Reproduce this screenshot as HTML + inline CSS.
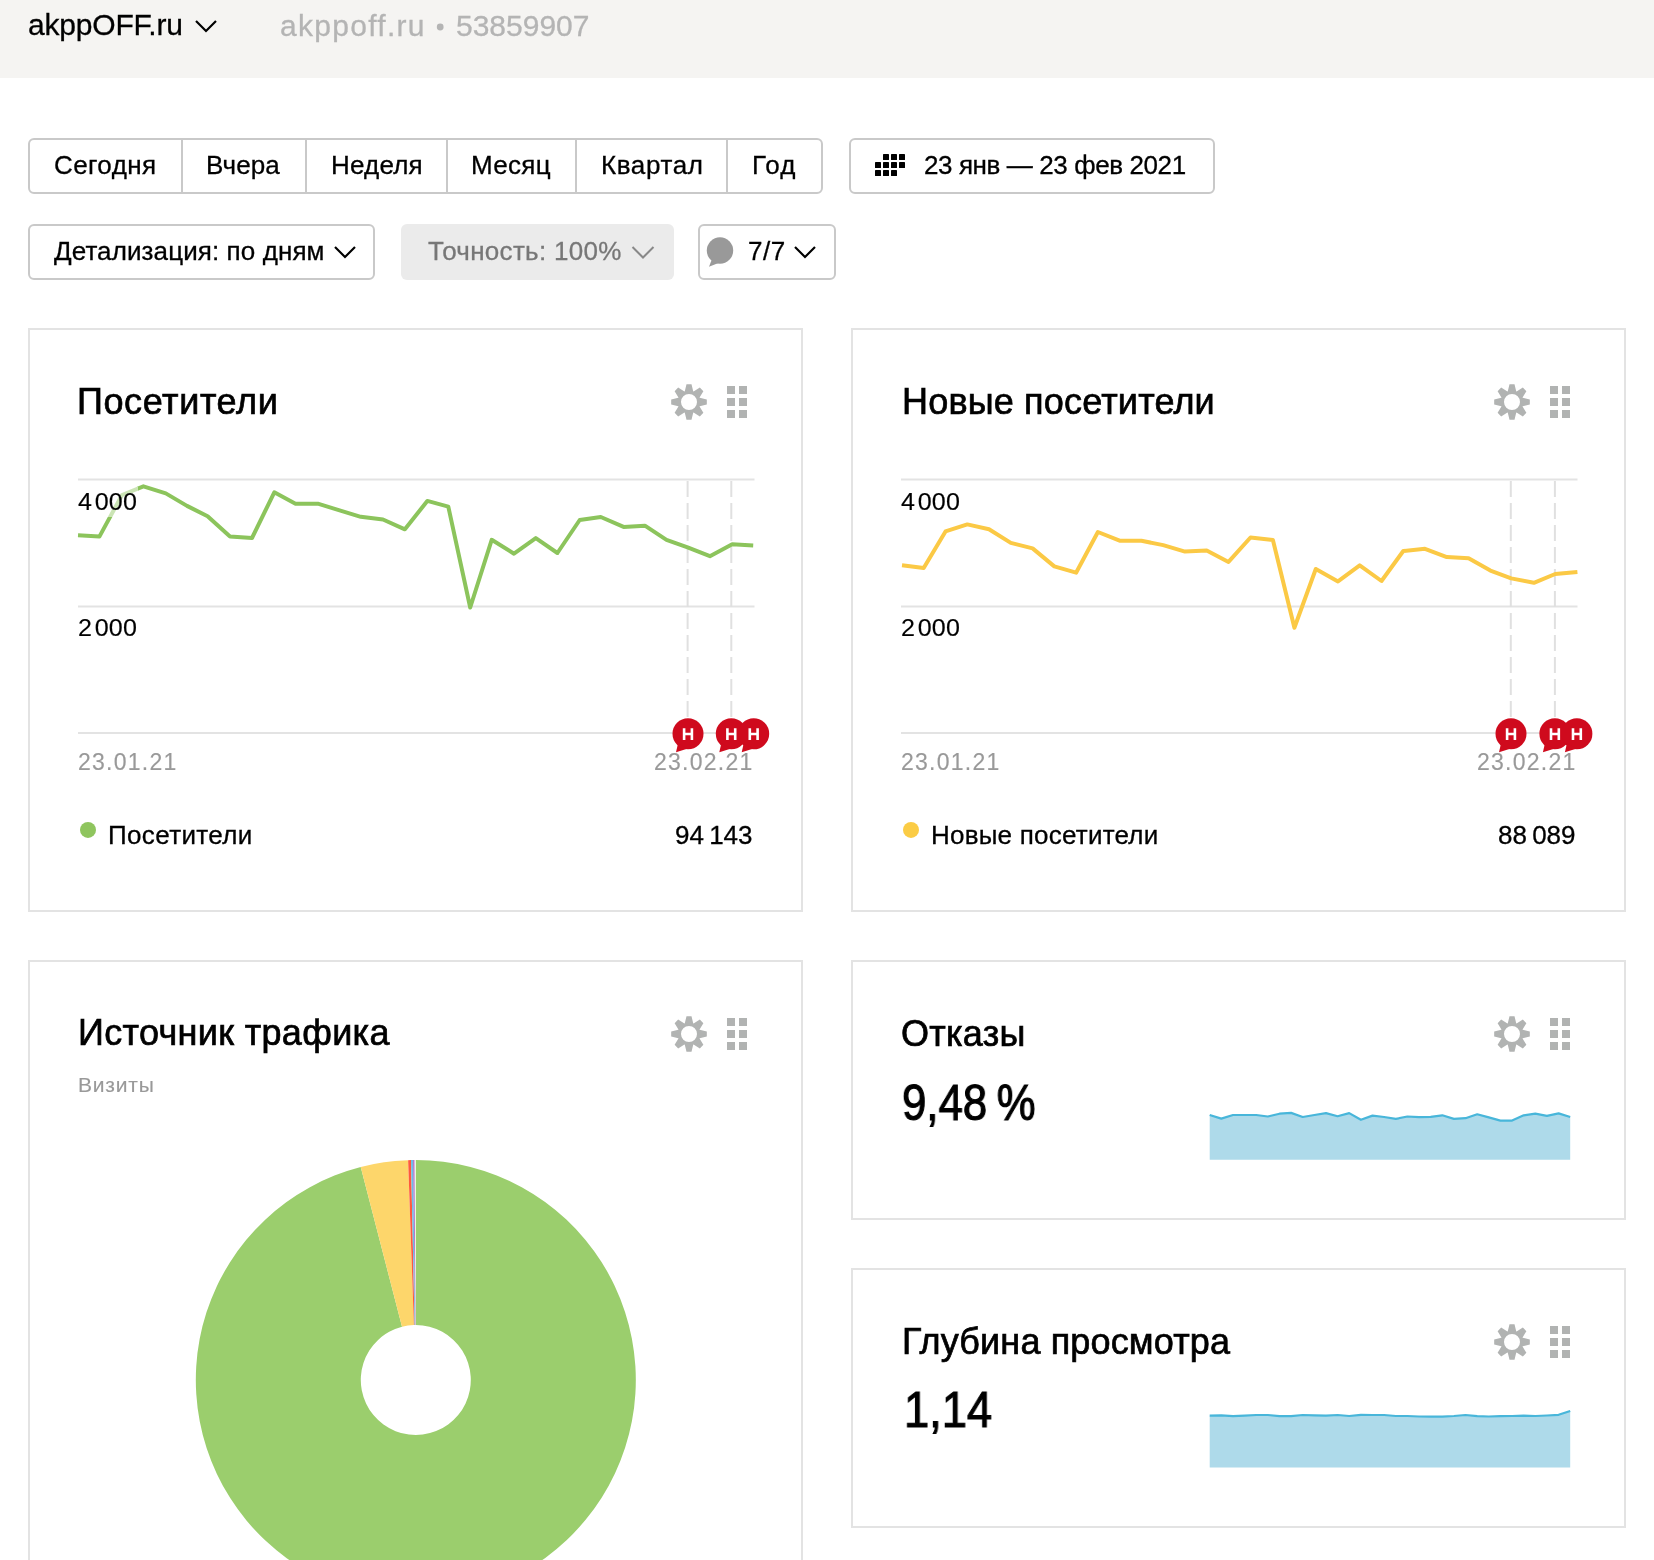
<!DOCTYPE html>
<html lang="ru"><head><meta charset="utf-8"><title>Метрика</title>
<style>
html,body{margin:0;padding:0;background:#fff;}
body{width:1654px;height:1560px;position:relative;overflow:hidden;font-family:"Liberation Sans", sans-serif;}
.t{position:absolute;white-space:nowrap;will-change:transform;}
.box{position:absolute;box-sizing:border-box;border:2px solid #c9c9c9;background:#fff;}
.card{position:absolute;border:2px solid #e3e3e3;background:#fff;}
svg{position:absolute;}
</style></head><body>
<div style="position:absolute;left:0;top:0;width:1654px;height:78px;background:#f5f4f2"></div>
<div class="t" style="left:27.50px;top:10.40px;font-size:30px;line-height:30px;color:#000;letter-spacing:-0.2px;font-weight:normal;-webkit-text-stroke:0.3px #000;">akppOFF.ru</div>
<svg style="position:absolute;left:0;top:0" width="260" height="60"><polyline points="196,21 206,31 216,21" fill="none" stroke="#000" stroke-width="2.2"/></svg>
<div class="t" style="left:279.50px;top:10.90px;font-size:30px;line-height:30px;color:#b4b4b4;letter-spacing:1.29px;font-weight:normal;-webkit-text-stroke:0.3px #b4b4b4;">akppoff.ru</div>
<svg style="position:absolute;left:0;top:0" width="460" height="60"><circle cx="440.2" cy="27" r="3.4" fill="#b4b4b4"/></svg>
<div class="t" style="left:455.50px;top:10.90px;font-size:30px;line-height:30px;color:#b4b4b4;letter-spacing:0.0px;font-weight:normal;-webkit-text-stroke:0.3px #b4b4b4;">53859907</div>
<div class="box" style="left:28px;top:138px;width:795px;height:56px;border-radius:6px"></div>
<div style="position:absolute;left:181px;top:139px;width:2px;height:54px;background:#c9c9c9"></div>
<div style="position:absolute;left:305px;top:139px;width:2px;height:54px;background:#c9c9c9"></div>
<div style="position:absolute;left:445.5px;top:139px;width:2px;height:54px;background:#c9c9c9"></div>
<div style="position:absolute;left:575px;top:139px;width:2px;height:54px;background:#c9c9c9"></div>
<div style="position:absolute;left:725.5px;top:139px;width:2px;height:54px;background:#c9c9c9"></div>
<div class="t" style="left:54.00px;top:152.09px;font-size:26px;line-height:26px;color:#000;letter-spacing:0.4px;font-weight:normal;-webkit-text-stroke:0.3px #000;">Сегодня</div>
<div class="t" style="left:205.50px;top:152.09px;font-size:26px;line-height:26px;color:#000;letter-spacing:0.1px;font-weight:normal;-webkit-text-stroke:0.3px #000;">Вчера</div>
<div class="t" style="left:330.50px;top:152.09px;font-size:26px;line-height:26px;color:#000;letter-spacing:0.2px;font-weight:normal;-webkit-text-stroke:0.3px #000;">Неделя</div>
<div class="t" style="left:470.50px;top:152.09px;font-size:26px;line-height:26px;color:#000;letter-spacing:0.3px;font-weight:normal;-webkit-text-stroke:0.3px #000;">Месяц</div>
<div class="t" style="left:600.50px;top:152.09px;font-size:26px;line-height:26px;color:#000;letter-spacing:0.6px;font-weight:normal;-webkit-text-stroke:0.3px #000;">Квартал</div>
<div class="t" style="left:751.50px;top:152.09px;font-size:26px;line-height:26px;color:#000;letter-spacing:1.0px;font-weight:normal;-webkit-text-stroke:0.3px #000;">Год</div>
<div class="box" style="left:849px;top:138px;width:366px;height:56px;border-radius:6px"></div>
<svg style="position:absolute;left:0;top:0" width="920" height="200"><rect x="883" y="154" width="6" height="6" rx="0.6"/><rect x="891" y="154" width="6" height="6" rx="0.6"/><rect x="899" y="154" width="6" height="6" rx="0.6"/><rect x="875" y="162" width="6" height="6" rx="0.6"/><rect x="883" y="162" width="6" height="6" rx="0.6"/><rect x="891" y="162" width="6" height="6" rx="0.6"/><rect x="899" y="162" width="6" height="6" rx="0.6"/><rect x="875" y="170" width="6" height="6" rx="0.6"/><rect x="883" y="170" width="6" height="6" rx="0.6"/><rect x="891" y="170" width="6" height="6" rx="0.6"/></svg>
<div class="t" style="left:924.00px;top:152.19px;font-size:26px;line-height:26px;color:#000;letter-spacing:-0.4px;font-weight:normal;-webkit-text-stroke:0.3px #000;">23 янв — 23 фев 2021</div>
<div class="box" style="left:28px;top:224px;width:347px;height:56px;border-radius:6px"></div>
<div class="t" style="left:54.00px;top:238.49px;font-size:26px;line-height:26px;color:#000;letter-spacing:0.1px;font-weight:normal;-webkit-text-stroke:0.3px #000;">Детализация: по дням</div>
<div style="position:absolute;left:401px;top:224px;width:273px;height:56px;border-radius:6px;background:#ebebeb"></div>
<div class="t" style="left:427.50px;top:237.99px;font-size:26px;line-height:26px;color:#777;letter-spacing:0.3px;font-weight:normal;-webkit-text-stroke:0.3px #777;">Точность: 100%</div>
<div class="box" style="left:698px;top:224px;width:138px;height:56px;border-radius:6px"></div>
<div class="t" style="left:747.50px;top:237.69px;font-size:26px;line-height:26px;color:#000;letter-spacing:0.5px;font-weight:normal;-webkit-text-stroke:0.3px #000;">7/7</div>
<svg style="position:absolute;left:0;top:0" width="840" height="290"><polyline points="335,247 345,257 355,247" fill="none" stroke="#000" stroke-width="2.2"/><polyline points="632.5,247 643,257.5 653.5,247" fill="none" stroke="#888" stroke-width="2"/><polyline points="795,247 805,257 815,247" fill="none" stroke="#000" stroke-width="2.2"/><circle cx="720" cy="250.5" r="13.2" fill="#999"/><path d="M712,259 L709,266.8 L721,262 Z" fill="#999"/></svg>
<div class="card" style="left:28px;top:328px;width:771px;height:580px"></div>
<div class="card" style="left:851px;top:328px;width:771px;height:580px"></div>
<div class="card" style="left:28px;top:960px;width:771px;height:696px"></div>
<div class="card" style="left:851px;top:960px;width:771px;height:256px"></div>
<div class="card" style="left:851px;top:1268px;width:771px;height:256px"></div>
<div class="t" style="left:77.00px;top:383.83px;font-size:36px;line-height:36px;color:#000;letter-spacing:0.6px;font-weight:normal;-webkit-text-stroke:0.7px #000;">Посетители</div>
<svg style="position:absolute;left:0;top:0;overflow:visible" width="1" height="1"><g fill="#b1b3b2"><path fill-rule="evenodd" d="M684.79,391.30 L686.49,384.18 L691.51,384.18 L693.21,391.30 L693.59,391.45 L699.83,387.62 L703.38,391.17 L699.55,397.41 L699.70,397.79 L706.82,399.49 L706.82,404.51 L699.70,406.21 L699.55,406.59 L703.38,412.83 L699.83,416.38 L693.59,412.55 L693.21,412.70 L691.51,419.82 L686.49,419.82 L684.79,412.70 L684.41,412.55 L678.17,416.38 L674.62,412.83 L678.45,406.59 L678.30,406.21 L671.18,404.51 L671.18,399.49 L678.30,397.79 L678.45,397.41 L674.62,391.17 L678.17,387.62 L684.41,391.45 Z M697,402 A8,8 0 1,0 681,402 A8,8 0 1,0 697,402 Z"/><rect x="727" y="386" width="8" height="8"/><rect x="727" y="398" width="8" height="8"/><rect x="727" y="410" width="8" height="8"/><rect x="739" y="386" width="8" height="8"/><rect x="739" y="398" width="8" height="8"/><rect x="739" y="410" width="8" height="8"/></g></svg>
<div class="t" style="left:901.50px;top:383.73px;font-size:36px;line-height:36px;color:#000;letter-spacing:0.18px;font-weight:normal;-webkit-text-stroke:0.7px #000;">Новые посетители</div>
<svg style="position:absolute;left:0;top:0;overflow:visible" width="1" height="1"><g fill="#b1b3b2"><path fill-rule="evenodd" d="M1507.79,391.30 L1509.49,384.18 L1514.51,384.18 L1516.21,391.30 L1516.59,391.45 L1522.83,387.62 L1526.38,391.17 L1522.55,397.41 L1522.70,397.79 L1529.82,399.49 L1529.82,404.51 L1522.70,406.21 L1522.55,406.59 L1526.38,412.83 L1522.83,416.38 L1516.59,412.55 L1516.21,412.70 L1514.51,419.82 L1509.49,419.82 L1507.79,412.70 L1507.41,412.55 L1501.17,416.38 L1497.62,412.83 L1501.45,406.59 L1501.30,406.21 L1494.18,404.51 L1494.18,399.49 L1501.30,397.79 L1501.45,397.41 L1497.62,391.17 L1501.17,387.62 L1507.41,391.45 Z M1520,402 A8,8 0 1,0 1504,402 A8,8 0 1,0 1520,402 Z"/><rect x="1550" y="386" width="8" height="8"/><rect x="1550" y="398" width="8" height="8"/><rect x="1550" y="410" width="8" height="8"/><rect x="1562" y="386" width="8" height="8"/><rect x="1562" y="398" width="8" height="8"/><rect x="1562" y="410" width="8" height="8"/></g></svg>
<div class="t" style="left:78.00px;top:1015.43px;font-size:36px;line-height:36px;color:#000;letter-spacing:0.33px;font-weight:normal;-webkit-text-stroke:0.7px #000;">Источник трафика</div>
<div class="t" style="left:78.00px;top:1073.62px;font-size:21px;line-height:21px;color:#999;letter-spacing:0.8px;font-weight:normal;-webkit-text-stroke:0.15px #999;">Визиты</div>
<svg style="position:absolute;left:0;top:0;overflow:visible" width="1" height="1"><g fill="#b1b3b2"><path fill-rule="evenodd" d="M684.79,1023.30 L686.49,1016.18 L691.51,1016.18 L693.21,1023.30 L693.59,1023.45 L699.83,1019.62 L703.38,1023.17 L699.55,1029.41 L699.70,1029.79 L706.82,1031.49 L706.82,1036.51 L699.70,1038.21 L699.55,1038.59 L703.38,1044.83 L699.83,1048.38 L693.59,1044.55 L693.21,1044.70 L691.51,1051.82 L686.49,1051.82 L684.79,1044.70 L684.41,1044.55 L678.17,1048.38 L674.62,1044.83 L678.45,1038.59 L678.30,1038.21 L671.18,1036.51 L671.18,1031.49 L678.30,1029.79 L678.45,1029.41 L674.62,1023.17 L678.17,1019.62 L684.41,1023.45 Z M697,1034 A8,8 0 1,0 681,1034 A8,8 0 1,0 697,1034 Z"/><rect x="727" y="1018" width="8" height="8"/><rect x="727" y="1030" width="8" height="8"/><rect x="727" y="1042" width="8" height="8"/><rect x="739" y="1018" width="8" height="8"/><rect x="739" y="1030" width="8" height="8"/><rect x="739" y="1042" width="8" height="8"/></g></svg>
<div class="t" style="left:901.00px;top:1015.53px;font-size:36px;line-height:36px;color:#000;letter-spacing:0.26px;font-weight:normal;-webkit-text-stroke:0.7px #000;">Отказы</div>
<svg style="position:absolute;left:0;top:0;overflow:visible" width="1" height="1"><g fill="#b1b3b2"><path fill-rule="evenodd" d="M1507.79,1023.30 L1509.49,1016.18 L1514.51,1016.18 L1516.21,1023.30 L1516.59,1023.45 L1522.83,1019.62 L1526.38,1023.17 L1522.55,1029.41 L1522.70,1029.79 L1529.82,1031.49 L1529.82,1036.51 L1522.70,1038.21 L1522.55,1038.59 L1526.38,1044.83 L1522.83,1048.38 L1516.59,1044.55 L1516.21,1044.70 L1514.51,1051.82 L1509.49,1051.82 L1507.79,1044.70 L1507.41,1044.55 L1501.17,1048.38 L1497.62,1044.83 L1501.45,1038.59 L1501.30,1038.21 L1494.18,1036.51 L1494.18,1031.49 L1501.30,1029.79 L1501.45,1029.41 L1497.62,1023.17 L1501.17,1019.62 L1507.41,1023.45 Z M1520,1034 A8,8 0 1,0 1504,1034 A8,8 0 1,0 1520,1034 Z"/><rect x="1550" y="1018" width="8" height="8"/><rect x="1550" y="1030" width="8" height="8"/><rect x="1550" y="1042" width="8" height="8"/><rect x="1562" y="1018" width="8" height="8"/><rect x="1562" y="1030" width="8" height="8"/><rect x="1562" y="1042" width="8" height="8"/></g></svg>
<div class="t" style="left:901.50px;top:1323.73px;font-size:36px;line-height:36px;color:#000;letter-spacing:0.15px;font-weight:normal;-webkit-text-stroke:0.7px #000;">Глубина просмотра</div>
<svg style="position:absolute;left:0;top:0;overflow:visible" width="1" height="1"><g fill="#b1b3b2"><path fill-rule="evenodd" d="M1507.79,1331.30 L1509.49,1324.18 L1514.51,1324.18 L1516.21,1331.30 L1516.59,1331.45 L1522.83,1327.62 L1526.38,1331.17 L1522.55,1337.41 L1522.70,1337.79 L1529.82,1339.49 L1529.82,1344.51 L1522.70,1346.21 L1522.55,1346.59 L1526.38,1352.83 L1522.83,1356.38 L1516.59,1352.55 L1516.21,1352.70 L1514.51,1359.82 L1509.49,1359.82 L1507.79,1352.70 L1507.41,1352.55 L1501.17,1356.38 L1497.62,1352.83 L1501.45,1346.59 L1501.30,1346.21 L1494.18,1344.51 L1494.18,1339.49 L1501.30,1337.79 L1501.45,1337.41 L1497.62,1331.17 L1501.17,1327.62 L1507.41,1331.45 Z M1520,1342 A8,8 0 1,0 1504,1342 A8,8 0 1,0 1520,1342 Z"/><rect x="1550" y="1326" width="8" height="8"/><rect x="1550" y="1338" width="8" height="8"/><rect x="1550" y="1350" width="8" height="8"/><rect x="1562" y="1326" width="8" height="8"/><rect x="1562" y="1338" width="8" height="8"/><rect x="1562" y="1350" width="8" height="8"/></g></svg>
<div class="t" style="left:902.00px;top:1077.67px;font-size:50px;line-height:50px;color:#000;letter-spacing:0px;font-weight:normal;transform:scaleX(0.875);transform-origin:0 0;-webkit-text-stroke:1.1px #000;">9,48<span style="margin-left:-3px"> </span>%</div>
<div class="t" style="left:904.00px;top:1385.17px;font-size:50px;line-height:50px;color:#000;letter-spacing:0px;font-weight:normal;transform:scaleX(0.905);transform-origin:0 0;-webkit-text-stroke:1.1px #000;">1,14</div>
<svg style="position:absolute;left:0;top:0;overflow:visible" width="1" height="1"><line x1="78" y1="479.5" x2="754.5" y2="479.5" stroke="#e3e3e3" stroke-width="2"/><line x1="78" y1="606.5" x2="754.5" y2="606.5" stroke="#e3e3e3" stroke-width="2"/><line x1="78" y1="733" x2="754.5" y2="733" stroke="#e3e3e3" stroke-width="2"/><line x1="687.6" y1="481" x2="687.6" y2="733" stroke="#e0e0e0" stroke-width="2" stroke-dasharray="16,6"/><line x1="731.3" y1="481" x2="731.3" y2="733" stroke="#e0e0e0" stroke-width="2" stroke-dasharray="16,6"/><path d="M78.0,535.3 L99.4,536.6 L122.0,495.0 L143.4,486.3 L165.8,493.4 L187.0,505.9 L207.6,516.2 L230.0,536.6 L252.0,538.0 L274.3,492.3 L295.5,503.7 L317.8,503.7 L339.6,510.3 L360.8,516.8 L383.0,519.5 L404.9,529.3 L427.3,500.9 L448.3,506.6 L470.2,607.5 L491.7,539.8 L514.0,553.7 L535.8,538.1 L557.4,553.0 L579.7,520.0 L600.8,517.0 L623.6,526.9 L644.9,525.7 L666.5,539.8 L687.6,547.3 L709.9,556.2 L732.2,544.3 L753.2,545.5" fill="none" stroke="#8cc45c" stroke-width="4" stroke-linejoin="round" stroke-linecap="butt"/><rect x="76" y="487" width="62" height="30" fill="#fff" fill-opacity="0.55"/><rect x="76" y="613" width="62" height="30" fill="#fff" fill-opacity="0.55"/><g><circle cx="688" cy="733.8" r="15.5" fill="#cf0a1d"/><path d="M678,743.5 L676,752.3 L688,748.5 Z" fill="#cf0a1d"/></g><g><circle cx="731.3" cy="733.8" r="15.5" fill="#cf0a1d"/><path d="M721.3,743.5 L719.3,752.3 L731.3,748.5 Z" fill="#cf0a1d"/></g><g><circle cx="753.7" cy="733.8" r="15.5" fill="#cf0a1d"/><path d="M743.7,743.5 L741.7,752.3 L753.7,748.5 Z" fill="#cf0a1d"/></g><path d="M684.1,728.2 V740 M691.9,728.2 V740 M684.1,734 H691.9" stroke="#fff" stroke-width="2.6" fill="none"/><path d="M727.4,728.2 V740 M735.1999999999999,728.2 V740 M727.4,734 H735.1999999999999" stroke="#fff" stroke-width="2.6" fill="none"/><path d="M749.8000000000001,728.2 V740 M757.6,728.2 V740 M749.8000000000001,734 H757.6" stroke="#fff" stroke-width="2.6" fill="none"/><circle cx="88" cy="829.9" r="8" fill="#8fc55e"/></svg>
<div class="t" style="left:77.50px;top:490.83px;font-size:23px;line-height:23px;color:#000;letter-spacing:0.1px;font-weight:normal;transform:scaleX(1.09);transform-origin:0 0;-webkit-text-stroke:0.15px #000;">4<span style="margin-left:2.5px"></span>000</div>
<div class="t" style="left:77.50px;top:616.63px;font-size:23px;line-height:23px;color:#000;letter-spacing:0.1px;font-weight:normal;transform:scaleX(1.09);transform-origin:0 0;-webkit-text-stroke:0.15px #000;">2<span style="margin-left:2.5px"></span>000</div>
<div class="t" style="left:78.00px;top:750.73px;font-size:23px;line-height:23px;color:#999;letter-spacing:1.25px;font-weight:normal;-webkit-text-stroke:0.15px #999;">23.01.21</div>
<div class="t" style="right:900.50px;text-align:right;top:750.53px;font-size:23px;line-height:23px;color:#999;letter-spacing:1.25px;font-weight:normal;-webkit-text-stroke:0.15px #999;">23.02.21</div>
<div class="t" style="left:107.50px;top:821.99px;font-size:26px;line-height:26px;color:#000;letter-spacing:0.35px;font-weight:normal;-webkit-text-stroke:0.3px #000;">Посетители</div>
<div class="t" style="right:901.00px;text-align:right;top:821.89px;font-size:26px;line-height:26px;color:#000;letter-spacing:0px;font-weight:normal;-webkit-text-stroke:0.3px #000;">94&#8201;143</div>
<svg style="position:absolute;left:0;top:0;overflow:visible" width="1" height="1"><line x1="901" y1="479.5" x2="1577.5" y2="479.5" stroke="#e3e3e3" stroke-width="2"/><line x1="901" y1="606.5" x2="1577.5" y2="606.5" stroke="#e3e3e3" stroke-width="2"/><line x1="901" y1="733" x2="1577.5" y2="733" stroke="#e3e3e3" stroke-width="2"/><line x1="1510.8" y1="481" x2="1510.8" y2="733" stroke="#e0e0e0" stroke-width="2" stroke-dasharray="16,6"/><line x1="1554.9" y1="481" x2="1554.9" y2="733" stroke="#e0e0e0" stroke-width="2" stroke-dasharray="16,6"/><path d="M902.0,565.3 L923.7,568.0 L945.5,531.4 L967.3,524.4 L989.0,529.2 L1010.8,542.9 L1032.6,548.4 L1054.3,566.4 L1076.1,572.7 L1097.9,532.0 L1119.6,540.7 L1141.4,540.7 L1163.2,545.1 L1185.0,551.6 L1206.7,550.5 L1228.5,561.9 L1250.5,537.5 L1272.9,540.1 L1294.4,627.8 L1315.8,569.0 L1338.0,581.4 L1359.7,565.3 L1381.5,581.0 L1403.3,551.0 L1425.0,548.8 L1446.8,557.1 L1468.6,558.2 L1490.4,570.6 L1511.2,578.4 L1533.9,582.8 L1555.2,574.0 L1577.4,571.9" fill="none" stroke="#fbc945" stroke-width="4" stroke-linejoin="round" stroke-linecap="butt"/><rect x="899" y="487" width="62" height="30" fill="#fff" fill-opacity="0.55"/><rect x="899" y="613" width="62" height="30" fill="#fff" fill-opacity="0.55"/><g><circle cx="1511" cy="733.8" r="15.5" fill="#cf0a1d"/><path d="M1501,743.5 L1499,752.3 L1511,748.5 Z" fill="#cf0a1d"/></g><g><circle cx="1554.9" cy="733.8" r="15.5" fill="#cf0a1d"/><path d="M1544.9,743.5 L1542.9,752.3 L1554.9,748.5 Z" fill="#cf0a1d"/></g><g><circle cx="1576.9" cy="733.8" r="15.5" fill="#cf0a1d"/><path d="M1566.9,743.5 L1564.9,752.3 L1576.9,748.5 Z" fill="#cf0a1d"/></g><path d="M1507.1,728.2 V740 M1514.9,728.2 V740 M1507.1,734 H1514.9" stroke="#fff" stroke-width="2.6" fill="none"/><path d="M1551.0,728.2 V740 M1558.8000000000002,728.2 V740 M1551.0,734 H1558.8000000000002" stroke="#fff" stroke-width="2.6" fill="none"/><path d="M1573.0,728.2 V740 M1580.8000000000002,728.2 V740 M1573.0,734 H1580.8000000000002" stroke="#fff" stroke-width="2.6" fill="none"/><circle cx="911" cy="829.9" r="8" fill="#fbcc45"/></svg>
<div class="t" style="left:900.50px;top:490.83px;font-size:23px;line-height:23px;color:#000;letter-spacing:0.1px;font-weight:normal;transform:scaleX(1.09);transform-origin:0 0;-webkit-text-stroke:0.15px #000;">4<span style="margin-left:2.5px"></span>000</div>
<div class="t" style="left:900.50px;top:616.63px;font-size:23px;line-height:23px;color:#000;letter-spacing:0.1px;font-weight:normal;transform:scaleX(1.09);transform-origin:0 0;-webkit-text-stroke:0.15px #000;">2<span style="margin-left:2.5px"></span>000</div>
<div class="t" style="left:901.00px;top:750.73px;font-size:23px;line-height:23px;color:#999;letter-spacing:1.25px;font-weight:normal;-webkit-text-stroke:0.15px #999;">23.01.21</div>
<div class="t" style="right:77.50px;text-align:right;top:750.53px;font-size:23px;line-height:23px;color:#999;letter-spacing:1.25px;font-weight:normal;-webkit-text-stroke:0.15px #999;">23.02.21</div>
<div class="t" style="left:930.50px;top:821.99px;font-size:26px;line-height:26px;color:#000;letter-spacing:0.22px;font-weight:normal;-webkit-text-stroke:0.3px #000;">Новые посетители</div>
<div class="t" style="right:78.00px;text-align:right;top:821.89px;font-size:26px;line-height:26px;color:#000;letter-spacing:0px;font-weight:normal;-webkit-text-stroke:0.3px #000;">88&#8201;089</div>
<svg style="position:absolute;left:0;top:0;overflow:visible" width="1" height="1"><path d="M415.80,1160.00 A220,220 0 1,1 360.72,1167.01 L402.03,1326.75 A55,55 0 1,0 415.80,1325.00 Z" fill="#9bce6d"/><path d="M360.72,1167.01 A220,220 0 0,1 408.12,1160.13 L413.88,1325.03 A55,55 0 0,0 402.03,1326.75 Z" fill="#fdd66b"/><path d="M408.12,1160.13 A220,220 0 0,1 411.00,1160.05 L414.60,1325.01 A55,55 0 0,0 413.88,1325.03 Z" fill="#ff5a3d"/><path d="M411.00,1160.05 A220,220 0 0,1 413.11,1160.02 L415.13,1325.00 A55,55 0 0,0 414.60,1325.01 Z" fill="#6bbde8"/><path d="M413.11,1160.02 A220,220 0 0,1 414.46,1160.00 L415.46,1325.00 A55,55 0 0,0 415.13,1325.00 Z" fill="#b06ac0"/></svg>
<svg style="position:absolute;left:0;top:0;overflow:visible" width="1" height="1"><path d="M1209.7,1115.0 L1221.3,1118.6 L1233.0,1115.0 L1244.6,1115.0 L1256.2,1115.0 L1267.8,1116.5 L1279.5,1113.7 L1291.1,1112.9 L1302.7,1117.0 L1314.4,1115.0 L1326.0,1113.1 L1337.6,1116.2 L1349.2,1113.1 L1360.9,1119.8 L1372.5,1115.6 L1384.1,1117.0 L1395.8,1118.9 L1407.4,1116.5 L1419.0,1117.1 L1430.7,1116.8 L1442.3,1115.3 L1453.9,1118.9 L1465.5,1118.2 L1477.2,1114.3 L1488.8,1117.4 L1500.4,1120.6 L1512.1,1120.6 L1523.7,1115.3 L1535.3,1113.7 L1546.9,1115.8 L1558.6,1113.4 L1570.2,1117.0 L1570.2,1159.7 L1209.7,1159.7 Z" fill="#aedaea"/><path d="M1209.7,1115.0 L1221.3,1118.6 L1233.0,1115.0 L1244.6,1115.0 L1256.2,1115.0 L1267.8,1116.5 L1279.5,1113.7 L1291.1,1112.9 L1302.7,1117.0 L1314.4,1115.0 L1326.0,1113.1 L1337.6,1116.2 L1349.2,1113.1 L1360.9,1119.8 L1372.5,1115.6 L1384.1,1117.0 L1395.8,1118.9 L1407.4,1116.5 L1419.0,1117.1 L1430.7,1116.8 L1442.3,1115.3 L1453.9,1118.9 L1465.5,1118.2 L1477.2,1114.3 L1488.8,1117.4 L1500.4,1120.6 L1512.1,1120.6 L1523.7,1115.3 L1535.3,1113.7 L1546.9,1115.8 L1558.6,1113.4 L1570.2,1117.0" fill="none" stroke="#48b6da" stroke-width="2.2" stroke-linejoin="round"/></svg>
<svg style="position:absolute;left:0;top:0;overflow:visible" width="1" height="1"><path d="M1209.7,1415.7 L1221.3,1415.3 L1233.0,1416.2 L1244.6,1415.7 L1256.2,1415.0 L1267.8,1415.0 L1279.5,1416.2 L1291.1,1416.2 L1302.7,1415.0 L1314.4,1415.3 L1326.0,1415.7 L1337.6,1415.0 L1349.2,1416.0 L1360.9,1414.8 L1372.5,1415.0 L1384.1,1415.0 L1395.8,1416.0 L1407.4,1416.0 L1419.0,1416.5 L1430.7,1416.7 L1442.3,1416.7 L1453.9,1416.0 L1465.5,1415.0 L1477.2,1416.2 L1488.8,1416.5 L1500.4,1416.2 L1512.1,1416.0 L1523.7,1415.7 L1535.3,1416.0 L1546.9,1415.5 L1558.6,1414.8 L1570.2,1411.0 L1570.2,1467.6 L1209.7,1467.6 Z" fill="#aedaea"/><path d="M1209.7,1415.7 L1221.3,1415.3 L1233.0,1416.2 L1244.6,1415.7 L1256.2,1415.0 L1267.8,1415.0 L1279.5,1416.2 L1291.1,1416.2 L1302.7,1415.0 L1314.4,1415.3 L1326.0,1415.7 L1337.6,1415.0 L1349.2,1416.0 L1360.9,1414.8 L1372.5,1415.0 L1384.1,1415.0 L1395.8,1416.0 L1407.4,1416.0 L1419.0,1416.5 L1430.7,1416.7 L1442.3,1416.7 L1453.9,1416.0 L1465.5,1415.0 L1477.2,1416.2 L1488.8,1416.5 L1500.4,1416.2 L1512.1,1416.0 L1523.7,1415.7 L1535.3,1416.0 L1546.9,1415.5 L1558.6,1414.8 L1570.2,1411.0" fill="none" stroke="#48b6da" stroke-width="2.2" stroke-linejoin="round"/></svg>
</body></html>
